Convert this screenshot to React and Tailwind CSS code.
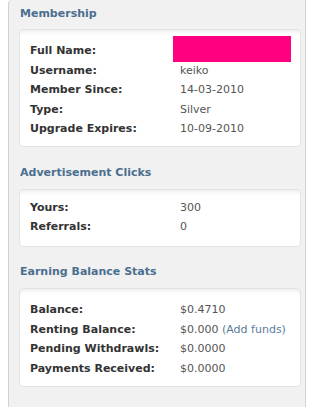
import React from "react";

const font = "font-['DejaVu_Sans',sans-serif]";

function Row({ label, children }) {
  return (
    <div className="flex h-[19.5px] items-center leading-[19.5px]">
      <div className="w-[150px] shrink-0 font-bold text-[#333333]">{label}</div>
      <div className="text-[#555555] whitespace-nowrap">{children}</div>
    </div>
  );
}

function Heading({ children, className }) {
  return (
    <div className={"pl-[1px] text-[11px] font-bold leading-[14px] text-[#4b6f8f] " + className}>
      {children}
    </div>
  );
}

function Box({ children, className }) {
  return (
    <div
      className={
        "w-[282px] rounded-[4px] border border-[#e3e3e3] bg-white pl-[10px] shadow-[inset_0_5px_4px_-3px_rgba(0,0,0,0.07)] " +
        className
      }
    >
      {children}
    </div>
  );
}

export default function App() {
  return (
    <div className={"h-[407px] w-[319px] overflow-hidden bg-white text-[11px] " + font}>
      <div className="ml-[8px] h-[407px] w-[298px] rounded-tl-[4px] border-x border-[#d2d2d2] bg-[#f1f1f1] pl-[10px]">
        <Heading className="h-[29px] pt-[7px]">Membership</Heading>
        <Box className="pt-[6px] pb-[7.5px]">
          <div className="flex h-[24.5px] items-start">
            <div className="w-[150px] shrink-0 pt-[4.5px] font-bold leading-[19.5px] text-[#333333]">
              Full Name:
            </div>
            <div className="-ml-[7px] h-[26px] w-[118px] bg-[#ff0080]" />
          </div>
          <Row label="Username:">keiko</Row>
          <Row label="Member Since:">14-03-2010</Row>
          <Row label="Type:">Silver</Row>
          <Row label="Upgrade Expires:">10-09-2010</Row>
        </Box>

        <Heading className="mt-[19px] h-[23px]">Advertisement Clicks</Heading>
        <Box className="pt-[7.5px] pb-[9.5px]">
          <Row label="Yours:">300</Row>
          <Row label="Referrals:">0</Row>
        </Box>

        <Heading className="mt-[18px] h-[23px]">Earning Balance Stats</Heading>
        <Box className="pt-[11px] pb-[8px]">
          <Row label="Balance:">$0.4710</Row>
          <Row label="Renting Balance:">
            $0.000 <span className="text-[#5a7b9b]">(Add funds)</span>
          </Row>
          <Row label="Pending Withdrawls:">$0.0000</Row>
          <Row label="Payments Received:">$0.0000</Row>
        </Box>
      </div>
    </div>
  );
}
